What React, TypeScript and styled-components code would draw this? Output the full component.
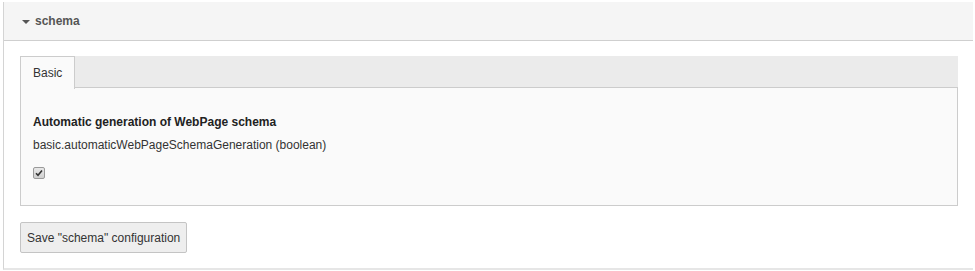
import styled, { createGlobalStyle } from "styled-components";

const GlobalStyle = createGlobalStyle`
  html, body {
    margin: 0;
    padding: 0;
    background: #ffffff;
    font-family: "Liberation Sans", Arial, Helvetica, sans-serif;
    font-size: 12px;
    color: #333333;
  }
`;

const Page = styled.div`
  padding: 2px 2px 0 3px;
`;

const Section = styled.div`
  border-left: 1px solid #d4d4d4;
  border-bottom: 2px solid #e6e6e6;
`;

const SectionHeader = styled.div`
  display: flex;
  align-items: center;
  gap: 5px;
  height: 38px;
  padding-left: 18px;
  background: #f5f5f5;
  border-bottom: 1px solid #cfcfcf;
  color: #555555;
  font-weight: bold;
  font-size: 12px;
`;

const Caret = styled.span`
  width: 0;
  height: 0;
  border-left: 4px solid transparent;
  border-right: 4px solid transparent;
  border-top: 4px solid #555555;
  margin-top: 1px;
`;

const SectionBody = styled.div`
  padding: 15px 15px 15px 16px;
`;

const TabBar = styled.div`
  display: flex;
  height: 31px;
  background: #ebebeb;
`;

const Tab = styled.div<{ $active?: boolean }>`
  display: flex;
  align-items: center;
  padding: 0 12px;
  height: 32px;
  background: ${(p) => (p.$active ? "#fafafa" : "transparent")};
  border: 1px solid ${(p) => (p.$active ? "#cccccc" : "transparent")};
  border-bottom: none;
  color: #333333;
  font-size: 12px;
`;

const TabPanel = styled.div`
  background: #fafafa;
  border: 1px solid #cccccc;
  padding: 27px 12px 26px;
`;

const FieldTitle = styled.div`
  font-weight: bold;
  color: #222222;
  margin-bottom: 9px;
`;

const FieldPath = styled.div`
  color: #333333;
  margin-bottom: 15px;
`;

const Check = styled.span`
  display: flex;
  align-items: center;
  justify-content: center;
  width: 10px;
  height: 10px;
  border: 1px solid #9a9a9a;
  border-radius: 2px;
  background: linear-gradient(#e8e8e8, #d0d0d0);
`;

const SaveButton = styled.button`
  margin-top: 16px;
  height: 31px;
  padding: 0 6px;
  background: #eeeeee;
  border: 1px solid #c4c4c4;
  border-radius: 2px;
  font-family: "Liberation Sans", Arial, Helvetica, sans-serif;
  font-size: 12px;
  color: #333333;
`;

export default function App() {
  return (
    <Page>
      <GlobalStyle />
      <Section>
        <SectionHeader>
          <Caret />
          schema
        </SectionHeader>
        <SectionBody>
          <TabBar>
            <Tab $active>Basic</Tab>
          </TabBar>
          <TabPanel>
            <FieldTitle>Automatic generation of WebPage schema</FieldTitle>
            <FieldPath>basic.automaticWebPageSchemaGeneration (boolean)</FieldPath>
            <Check>
              <svg width="8" height="8" viewBox="0 0 8 8">
                <path d="M1 4.2 L3 6.2 L7 1.5" stroke="#333" strokeWidth="1.6" fill="none" />
              </svg>
            </Check>
          </TabPanel>
          <SaveButton>Save "schema" configuration</SaveButton>
        </SectionBody>
      </Section>
    </Page>
  );
}
